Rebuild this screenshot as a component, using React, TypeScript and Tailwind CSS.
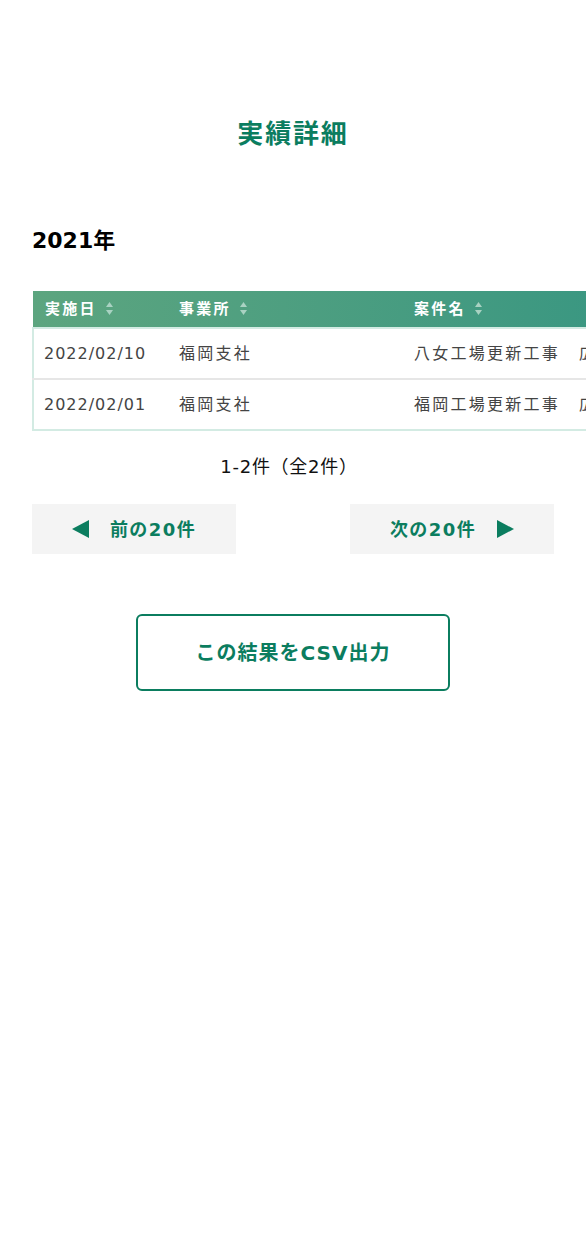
import React from 'react';

const rows = [
    { date: '2022/02/10', office: '福岡支社', name: '八女工場更新工事', client: '広川町' },
    { date: '2022/02/01', office: '福岡支社', name: '福岡工場更新工事', client: '広川町' },
];

const SortIcon: React.FC = () => (
    <svg width="9" height="15" viewBox="0 0 9 15" className="ml-2 inline-block align-[-2px]">
        <path d="M4.5 1 L8 6 L1 6 Z" fill="#a9d2c2" />
        <path d="M4.5 14 L8 9 L1 9 Z" fill="#a9d2c2" />
    </svg>
);

export default function App() {
    return (
        <div className="min-h-[1256px] bg-white px-8 font-['DejaVu_Sans','Noto_Sans_CJK_JP',sans-serif]">
            <h1 className="pt-[115px] text-center text-[26px] font-bold leading-[38px] tracking-[0.07em] text-[#0b7d5f]">
                実績詳細
            </h1>

            <h2 className="mt-[73px] text-[22px] font-bold leading-[30px] text-black">2021年</h2>

            {/* Table (scrolls sideways) */}
            <div className="-mr-8 mt-[35px] overflow-hidden">
                <table className="w-[780px] border-collapse text-left">
                    <thead>
                        <tr className="h-[37px] bg-gradient-to-r from-[#5ca57f] to-[#2a9282] text-[15px] font-bold tracking-[0.15em] text-white">
                            <th className="w-[134px] pl-3 font-bold">実施日<SortIcon /></th>
                            <th className="w-[235px] pl-3 font-bold">事業所<SortIcon /></th>
                            <th className="w-[165px] pl-3 font-bold">案件名<SortIcon /></th>
                            <th className="text-center font-bold">発注者<SortIcon /></th>
                        </tr>
                    </thead>
                    <tbody className="border-l-2 border-[#d3ebe3] text-[16px] tracking-[0.14em] text-[#444]">
                        {rows.map((r, i) => (
                            <tr
                                key={i}
                                className={
                                    'h-[51px] border-t-2 ' +
                                    (i === 0 ? 'border-[#d3ebe3]' : 'border-[#e6e6e6] border-b-2 border-b-[#d3ebe3]')
                                }
                            >
                                <td className="pl-[10px] tracking-[1px]">{r.date}</td>
                                <td className="pl-3">{r.office}</td>
                                <td className="pl-3 whitespace-nowrap">{r.name}</td>
                                <td className="pl-3">{r.client}</td>
                            </tr>
                        ))}
                    </tbody>
                </table>
            </div>

            <p className="mt-[22px] pr-2 text-center text-[18px] leading-[28px] tracking-[0.04em] text-[#111]">1-2件（全2件）</p>

            {/* Pager */}
            <div className="mt-[23px] flex justify-between">
                <button className="flex h-[50px] w-[204px] items-center justify-center gap-5 bg-[#f4f4f4] text-[18px] font-bold tracking-[0.08em] text-[#0b7d5f]">
                    <svg width="18" height="18" viewBox="0 0 18 18">
                        <path d="M0 9 L17 0 L17 18 Z" fill="#0b7d5f" />
                    </svg>
                    前の20件
                </button>
                <button className="flex h-[50px] w-[204px] items-center justify-center gap-5 bg-[#f4f4f4] text-[18px] font-bold tracking-[0.08em] text-[#0b7d5f]">
                    次の20件
                    <svg width="18" height="18" viewBox="0 0 18 18">
                        <path d="M18 9 L1 0 L1 18 Z" fill="#0b7d5f" />
                    </svg>
                </button>
            </div>

            {/* CSV export */}
            <div className="mt-[60px] flex justify-center">
                <button className="h-[77px] w-[314px] rounded-md border-2 border-[#0b7d5f] bg-white text-[20px] font-bold tracking-[0.05em] text-[#0b7d5f]">
                    この結果をCSV出力
                </button>
            </div>
        </div>
    );
}
